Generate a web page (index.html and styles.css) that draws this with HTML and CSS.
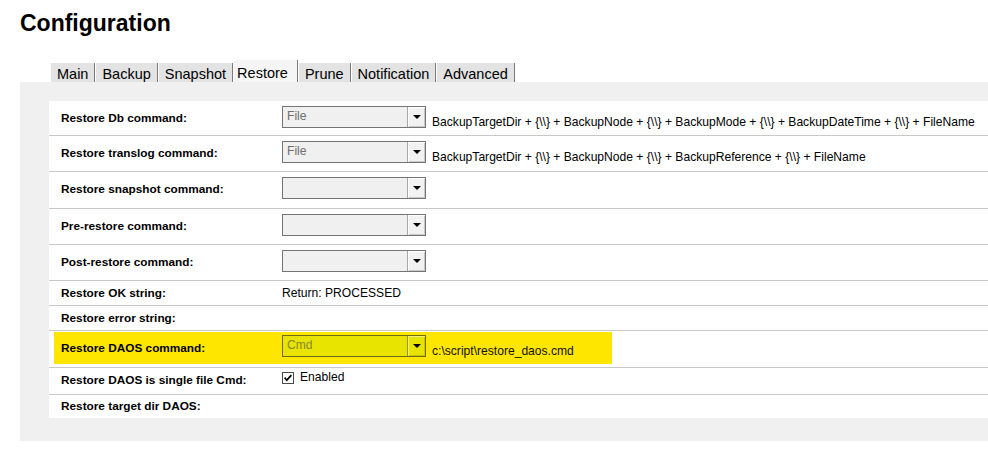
FILE: index.html
```html
<!DOCTYPE html>
<html>
<head>
<meta charset="utf-8">
<title>Configuration</title>
<link rel="stylesheet" href="styles.css">
</head>
<body>
<h1 class="title">Configuration</h1>
<div class="tabs">
  <div class="tab">Main</div>
  <div class="tab">Backup</div>
  <div class="tab">Snapshot</div>
  <div class="tab active">Restore</div>
  <div class="tab">Prune</div>
  <div class="tab">Notification</div>
  <div class="tab">Advanced</div>
</div>
<div class="panel">
  <div class="table">
    <div class="row r-first">
      <div class="label">Restore Db command:</div>
      <div class="value">
        <div class="select"><span class="select-text">File</span><span class="select-btn"><svg width="8" height="4" viewBox="0 0 8 4"><polygon points="0,0 8,0 4,4" fill="#000"/></svg></span></div>
        <span class="after">BackupTargetDir + {\\} + BackupNode + {\\} + BackupMode + {\\} + BackupDateTime + {\\} + FileName</span>
      </div>
    </div>
    <div class="row r-sel">
      <div class="label">Restore translog command:</div>
      <div class="value">
        <div class="select"><span class="select-text">File</span><span class="select-btn"><svg width="8" height="4" viewBox="0 0 8 4"><polygon points="0,0 8,0 4,4" fill="#000"/></svg></span></div>
        <span class="after">BackupTargetDir + {\\} + BackupNode + {\\} + BackupReference + {\\} + FileName</span>
      </div>
    </div>
    <div class="row r-sel">
      <div class="label">Restore snapshot command:</div>
      <div class="value">
        <div class="select"><span class="select-text"></span><span class="select-btn"><svg width="8" height="4" viewBox="0 0 8 4"><polygon points="0,0 8,0 4,4" fill="#000"/></svg></span></div>
      </div>
    </div>
    <div class="row r-sel">
      <div class="label">Pre-restore command:</div>
      <div class="value">
        <div class="select"><span class="select-text"></span><span class="select-btn"><svg width="8" height="4" viewBox="0 0 8 4"><polygon points="0,0 8,0 4,4" fill="#000"/></svg></span></div>
      </div>
    </div>
    <div class="row r-sel">
      <div class="label">Post-restore command:</div>
      <div class="value">
        <div class="select"><span class="select-text"></span><span class="select-btn"><svg width="8" height="4" viewBox="0 0 8 4"><polygon points="0,0 8,0 4,4" fill="#000"/></svg></span></div>
      </div>
    </div>
    <div class="row r-text">
      <div class="label">Restore OK string:</div>
      <div class="value value-center">Return: PROCESSED</div>
    </div>
    <div class="row r-text2">
      <div class="label">Restore error string:</div>
      <div class="value value-center"></div>
    </div>
    <div class="row r-sel r-hl">
      <div class="hl-box">
        <div class="label">Restore DAOS command:</div>
        <div class="value">
          <div class="select select-hl"><span class="select-text">Cmd</span><span class="select-btn"><svg width="8" height="4" viewBox="0 0 8 4"><polygon points="0,0 8,0 4,4" fill="#000"/></svg></span></div>
          <span class="after after-hl">c:\script\restore_daos.cmd</span>
        </div>
      </div>
    </div>
    <div class="row r-check">
      <div class="label">Restore DAOS is single file Cmd:</div>
      <div class="value">
        <span class="checkbox"><svg width="12" height="12" viewBox="0 0 12 12"><rect x="0.5" y="0.5" width="11" height="11" fill="#fff" stroke="#4a4a4a"/><polyline points="2.6,5.6 4.8,8.2 9.4,3.2" fill="none" stroke="#000" stroke-width="1.7"/></svg></span>
        <span class="check-label">Enabled</span>
      </div>
    </div>
    <div class="row r-last">
      <div class="label">Restore target dir DAOS:</div>
      <div class="value value-center"></div>
    </div>
  </div>
</div>
</body>
</html>
```
FILE: styles.css
```css
html, body {
  margin: 0;
  padding: 0;
  background: #ffffff;
  overflow: hidden;
}

body {
  font-family: "Liberation Sans", Arial, sans-serif;
  color: #000;
}

.title {
  margin: 10px 0 0 20px;
  font-size: 23px;
  line-height: 27px;
  font-weight: bold;
}

.tabs {
  display: flex;
  align-items: flex-end;
  height: 22px;
  margin: 23px 0 0 51px;
}

.tab {
  box-sizing: border-box;
  height: 19px;
  padding: 3px 6px 0 6px;
  font-size: 14.5px;
  line-height: 16px;
  background: #e3e3e3;
  border-right: 1px solid #7a7a7a;
  box-shadow: 1px 0 0 #ffffff;
  margin-right: 1px;
  white-space: nowrap;
}

.tab.active {
  height: 22px;
  padding: 5px 9px 0 3px;
  background: #f5f5f5;
}

.panel {
  margin-left: 20px;
  background: #f0f0f0;
  padding: 19px 0 23px 29px;
}

.table {
  background: #ffffff;
}

.row {
  display: flex;
  box-sizing: border-box;
  padding-left: 12px;
  border-top: 1px solid #c8c8c8;
}

.r-first { height: 34px; border-top: none; }
.r-sel { height: 36.25px; }
.r-text { height: 25px; }
.r-text2 { height: 25.25px; }
.r-check { height: 27.75px; }
.r-last { height: 23.25px; }

.label {
  flex: none;
  width: 221px;
  align-self: center;
  font-size: 11.8px;
  line-height: 15px;
  font-weight: bold;
  white-space: nowrap;
}

.value {
  display: flex;
  align-items: flex-start;
  font-size: 12.1px;
  line-height: 15px;
  white-space: nowrap;
}

.value-center {
  align-self: center;
}

.select {
  flex: none;
  display: flex;
  box-sizing: border-box;
  width: 144px;
  height: 22px;
  margin-top: 5px;
  border: 1px solid #747474;
  background: #f0f0f0;
}

.select-text {
  flex: 1;
  padding-left: 4px;
  line-height: 19px;
  color: #6e6e6e;
}

.select-btn {
  flex: none;
  display: flex;
  align-items: flex-start;
  justify-content: center;
  box-sizing: border-box;
  width: 18px;
  height: 20px;
  padding-top: 8px;
  padding-left: 1px;
  background: #f2f2f2;
  border-left: 1px solid #a8a8a8;
  box-shadow: inset 1px 1px 0 #ffffff, inset -1px -1px 0 #c8c8c8;
}

.select-btn svg {
  display: block;
}

.after {
  margin-left: 6px;
  margin-top: 14px;
}

.r-hl {
  padding-left: 5px;
}

.hl-box {
  display: flex;
  box-sizing: border-box;
  width: 558px;
  height: 32px;
  margin-top: 1px;
  padding-left: 7px;
  background: #ffe600;
}

.select-hl {
  margin-top: 3px;
  background: #e8e400;
  border-color: #6f6c10;
}

.select-hl .select-text {
  color: #8a8630;
}

.select-hl .select-btn {
  background: #e8e400;
  border-left-color: #9a9620;
  box-shadow: inset 1px 1px 0 #f4f27a, inset -1px -1px 0 #c9c500;
}

.after-hl {
  margin-top: 12px;
  color: #111100;
}

.checkbox {
  display: block;
  margin-top: 4px;
  width: 12px;
  height: 12px;
}

.checkbox svg {
  display: block;
}

.check-label {
  margin-left: 6px;
  margin-top: 2.5px;
}
```
